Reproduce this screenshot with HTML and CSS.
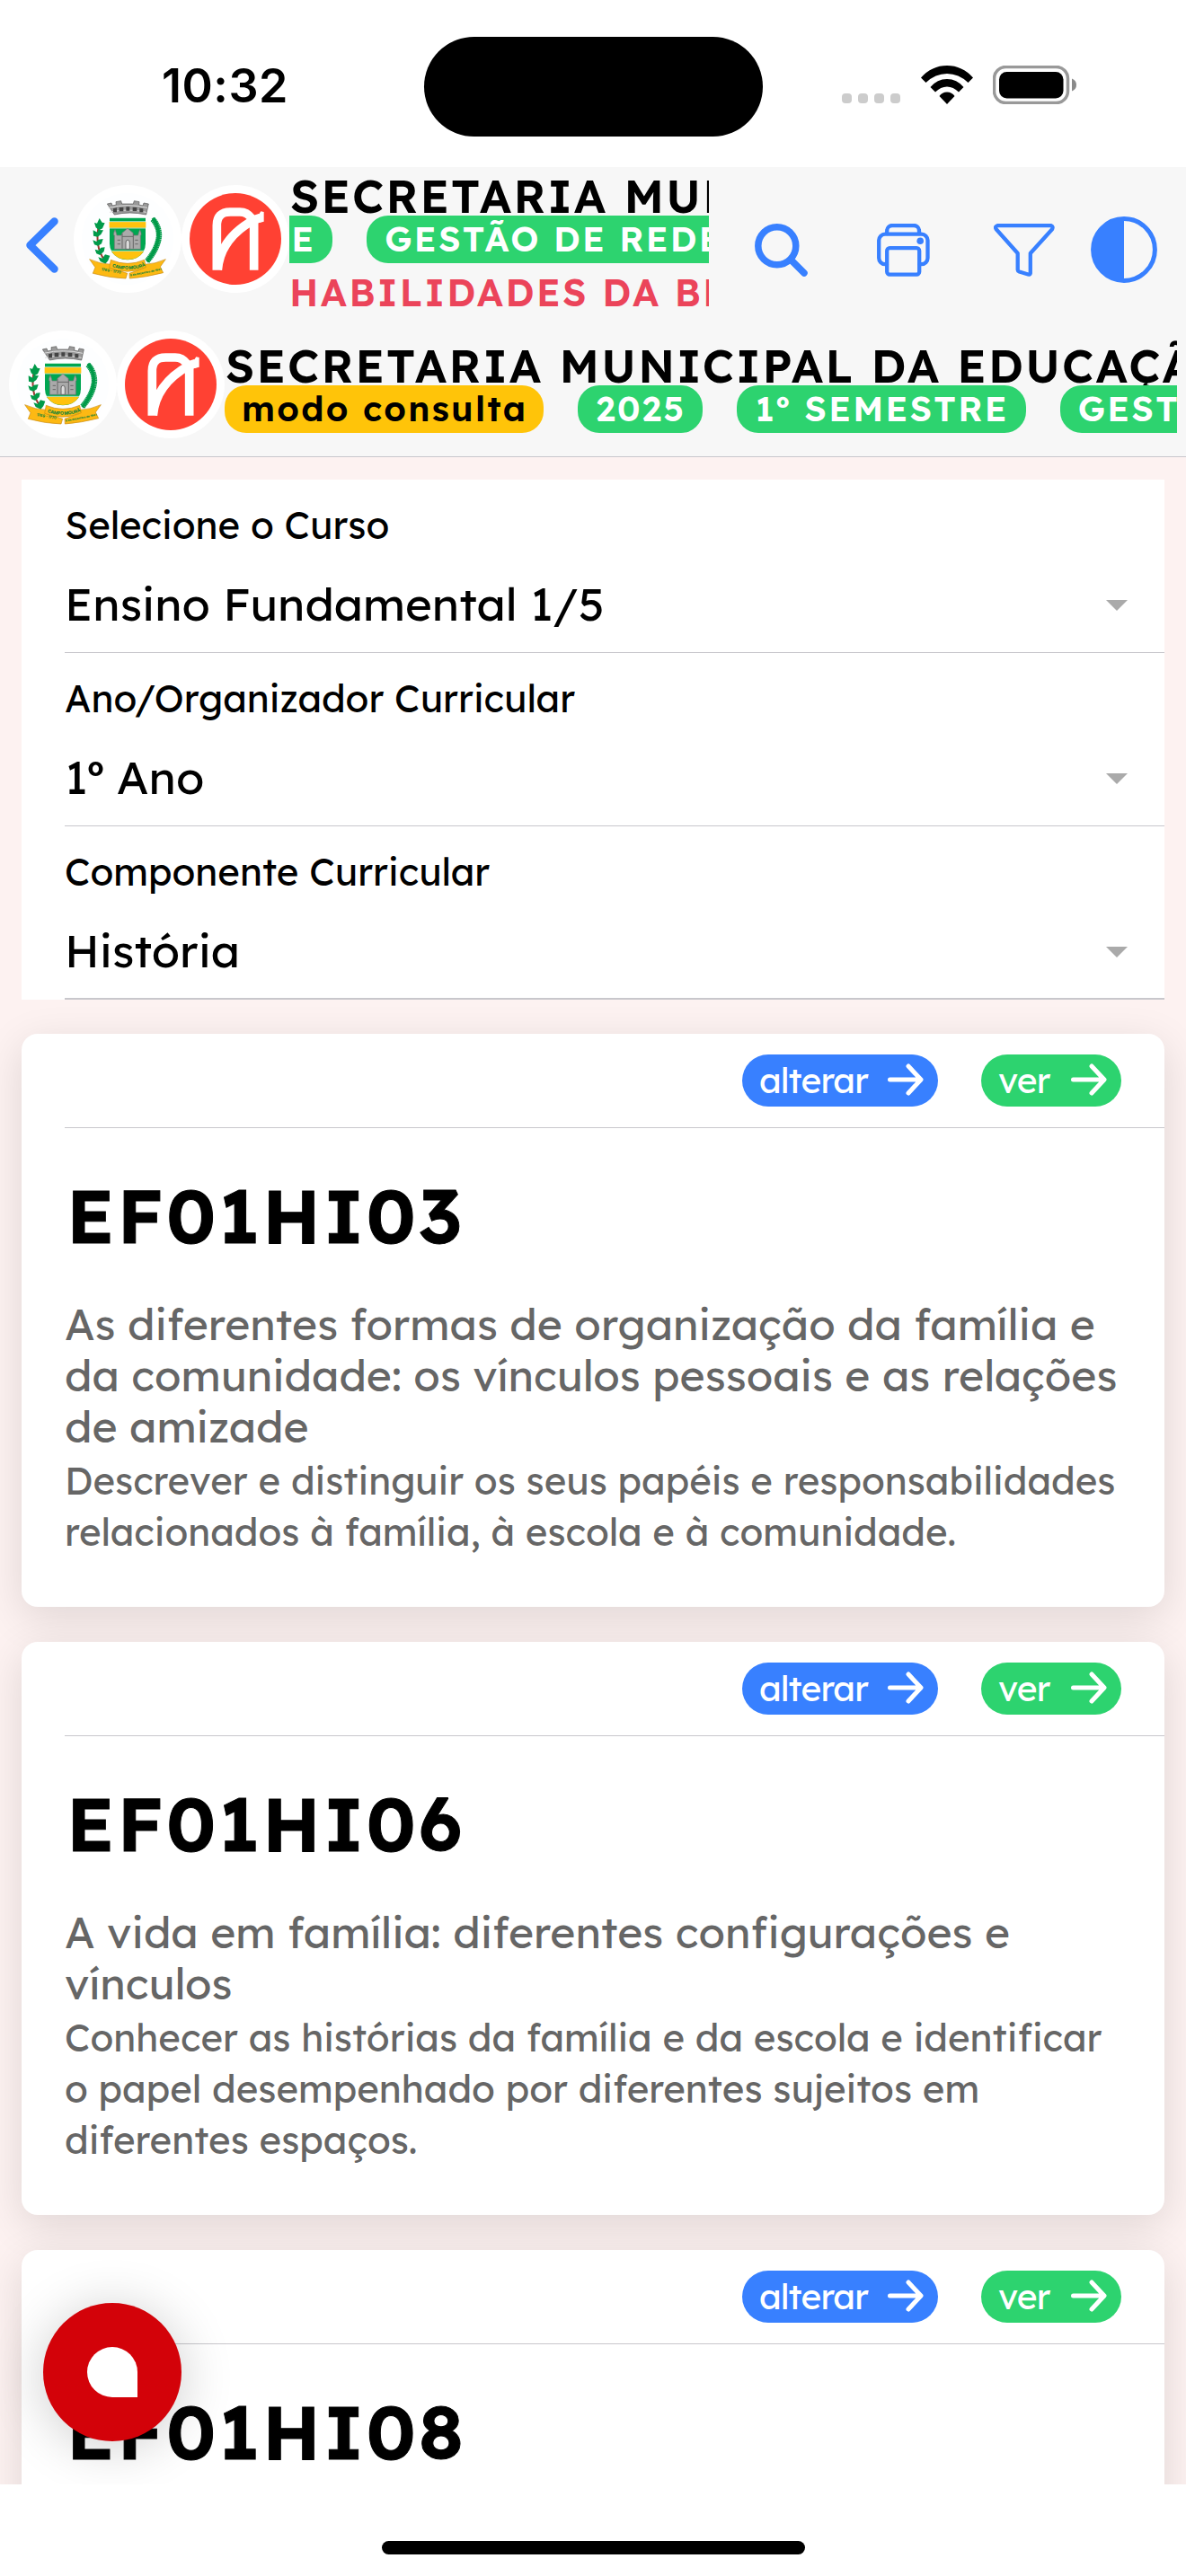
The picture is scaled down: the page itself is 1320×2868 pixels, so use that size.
FILE: index.html
```
<!DOCTYPE html>
<html lang="pt-BR">
<head>
    <meta charset="UTF-8">
    <meta name="viewport" content="width=device-width, initial-scale=1.0">
    <title>Habilidades da BNCC</title>
    <link rel="stylesheet" href="styles.css">
</head>
<body>

<!-- Logos reutilizados nas duas linhas do cabeçalho -->
<svg class="defs" aria-hidden="true">
    <symbol id="brasao" viewBox="6 6 360 360">
        <circle cx="186" cy="186" r="180" fill="#fff"/>
        <circle cx="186" cy="186" r="153" fill="#fdfeff"/>
        <!-- coroa -->
        <path d="M118 69l14-3 3 9 13-3-1-10 17-3 3 10h38l3-10 17 3-1 10 13 3 3-9 16 3-8 36q-55-12-106 0z" fill="#999" stroke="#555" stroke-width="2"/>
        <path d="M122 82q65-16 130 0M126 97q61-14 122 0" fill="none" stroke="#ddd" stroke-width="3"/>
        <path d="M138 85v12h12v-15zM158 81v13h14V80zM181 79v13h12V79zM203 80v13h14V81zM226 83v14h12V85z" fill="#444"/>
        <!-- escudo -->
        <path d="M124 112H248V202a62 54 0 0 1-124 0z" fill="#fff"/>
        <path d="M126 116H246V202q0 16-8 28-17 25-52 26-35-1-52-26-8-12-8-28z" fill="#00a651"/>
        <path d="M125 129H247v20H125z" fill="#ffc20e"/>
        <path d="M132 227H240q-18 28-54 28-36 0-54-28z" fill="#ffc20e"/>
        <path d="M125 128H247M125 150H247M132 226H240" stroke="#fff" stroke-width="2"/>
        <path d="M142 220v-46h-2v-8l4-11 4 11 2 8h16l2-8 18-15 18 15 2 8h15l2-8 4-11 4 11v8h-2v46z" fill="#aaa" stroke="#777" stroke-width="2"/>
        <path d="M180 220v-22a6 8 0 0 1 13 0v22zM152 190h10M152 203h10M211 190h10M211 203h10M168 178h36M168 168v50M205 168v50" fill="#ddd" stroke="#666" stroke-width="3"/>
        <!-- ramos -->
        <path d="M90 142q-7 28-3 60 4 30 22 55" fill="none" stroke="#9c3a30" stroke-width="6"/>
        <path d="M92 117l9 14 9 2-8 18-11 6-11-9-5-16 9 2zM71 157l14 7 3-8 17 1-8 14-11 8-14-3zM70 190l12 5 7-7 15-2-5 16-12 7-12-4zM77 221l12 3 8-9 13-1-3 14-13 12-12-5zM88 247l14 4 9-13 16 4-6 16-9 11-17-8z" fill="#009a49"/>
        <path d="M270 120q22 26 21 56-4 42-40 84" fill="none" stroke="#009a49" stroke-width="19" stroke-dasharray="5 1"/>
        <path d="M270 116q26 34 17 76-8 36-36 70" fill="none" stroke="#009a49" stroke-width="10"/>
        <!-- faixas -->
        <path d="M59 254q35 16 72 17l2 13 52 17-5 17q-52-1-110-17l8-20z" fill="#fdb913" stroke="#c88a10" stroke-width="2"/>
        <path d="M313 254q-35 16-70 17l-3 13-48 17 1 17q54-4 112-19l-10-20z" fill="#fdb913" stroke="#c88a10" stroke-width="2"/>
        <path d="M130 256q56 24 112 0l5 25q-62 26-122 2z" fill="#fdb913" stroke="#c88a10" stroke-width="2"/>
        <path id="curva-nome" d="M134 279q52 18 106-1" fill="none"/>
        <text class="brasao-nome"><textPath href="#curva-nome">CAMPO MOURÃO</textPath></text>
        <text class="brasao-data" x="98" y="291" transform="rotate(10 98 291)">1769 - 1770</text>
        <text class="brasao-lema" x="195" y="311" transform="rotate(-11 195 311)">9 de dezembro de 1947</text>
    </symbol>
    <symbol id="marca" viewBox="6 6 360 360">
        <circle cx="186" cy="186" r="180" fill="#fff"/>
        <circle cx="186" cy="186" r="153" fill="#ff4133"/>
        <path d="M124 290V141q0-45 45-45h32q24 0 40 22M248 290V122M127 290q8-105 121-168l20-6" fill="none" stroke="#fff" stroke-width="29"/>
        <path d="M245 112q18-3 26-18l10 2v32l-24 6z" fill="#fff"/>
    </symbol>
    <symbol id="seta" viewBox="0 0 40 36">
        <path d="M2.500 18H36M23 3L37 18L23 33" fill="none" stroke="#fff" stroke-width="5" stroke-linecap="round" stroke-linejoin="round"/>
    </symbol>
</svg>

<div class="app">
    <!-- Barra de status -->
    <div class="status-bar">
        <div class="time">10:32</div>
        <div class="island"></div>
        <div class="signal"><i></i><i></i><i></i><i></i></div>
        <svg class="wifi" viewBox="0 0 58 43">
            <path d="M0 13.500Q12 0 29 0Q46 0 58 13.500L52.500 19Q42 9 29 9Q16 9 5.500 19z"/>
            <path d="M10.500 24Q18 15 29 15Q40 15 47.500 24L42 29.500Q36 23.500 29 23.500Q22 23.500 16 29.500z"/>
            <path d="M20.500 34Q23.500 29.500 29 29.500Q34.500 29.500 37.500 34L29 43z"/>
        </svg>
        <svg class="battery" viewBox="0 0 94 43">
            <rect x="1.500" y="1.500" width="82" height="40" rx="13" fill="none" stroke="#999" stroke-width="3.500"/>
            <rect x="7" y="7" width="71.500" height="29.500" rx="8.500"/>
            <path d="M88 14.500q5 2 5 7t-5 7z" fill="#8a8a8a"/>
        </svg>
    </div>

    <!-- Cabeçalho -->
    <header class="header">
        <div class="toolbar">
            <svg class="back" viewBox="0 0 36 62">
                <path d="M31.500 4.500L4.500 31L31.500 57.500" fill="none" stroke="#3880ff" stroke-width="8.500" stroke-linecap="round" stroke-linejoin="round"/>
            </svg>
            <svg class="logo"><use href="#brasao"/></svg>
            <svg class="logo"><use href="#marca"/></svg>
            <div class="heading">
                <h1>SECRETARIA MUNICIPAL DA EDUCAÇÃO</h1>
                <div class="badges scrolled">
                    <span class="badge">1º SEMESTRE</span>
                    <span class="badge">GESTÃO DE REDE</span>
                </div>
                <h2>HABILIDADES DA BNCC</h2>
            </div>
            <div class="actions">
                <svg class="icon-search" viewBox="0 0 59 59">
                    <circle cx="24.800" cy="24.800" r="21"/>
                    <path d="M40 40L55 55"/>
                </svg>
                <svg class="icon-print" viewBox="0 0 59 59">
                    <path d="M11.200 11V8a6 6 0 0 1 6-6H41a6 6 0 0 1 6 6v3"/>
                    <path d="M11 45.200H9.200a7 7 0 0 1-7-7V18.600a7 7 0 0 1 7-7H49.500a7 7 0 0 1 7 7V38.200a7 7 0 0 1-7 7H47.500"/>
                    <rect x="11.200" y="27.200" width="36" height="29.400" rx="3"/>
                    <circle class="dot" cx="48.200" cy="19.300" r="3.800"/>
                </svg>
                <svg class="icon-filter" viewBox="0 0 68 59">
                    <path d="M4 2.200H64q2.500 1 1 4L40.800 33V55q-.4 2-2.500 1.500L28.500 53.500q-1.800-.8-1.800-2V33L2.800 6.200q-2-3 1.200-4z"/>
                </svg>
                <svg class="icon-contrast" viewBox="0 0 74 74">
                    <circle cx="37" cy="37" r="34.400"/>
                    <path d="M37 2.500a34.500 34.500 0 0 0 0 69z"/>
                </svg>
            </div>
        </div>

        <div class="subbar">
            <svg class="logo"><use href="#brasao"/></svg>
            <svg class="logo"><use href="#marca"/></svg>
            <div class="heading">
                <h1>SECRETARIA MUNICIPAL DA EDUCAÇÃO</h1>
                <div class="badges">
                    <span class="badge warning">modo consulta</span>
                    <span class="badge">2025</span>
                    <span class="badge">1º SEMESTRE</span>
                    <span class="badge">GESTÃO DE REDE</span>
                </div>
            </div>
        </div>
    </header>

    <main class="content">
        <!-- Filtros -->
        <div class="filters">
            <div class="field">
                <label>Selecione o Curso</label>
                <div class="select">Ensino Fundamental 1/5</div>
            </div>
            <div class="field">
                <label>Ano/Organizador Curricular</label>
                <div class="select">1º Ano</div>
            </div>
            <div class="field">
                <label>Componente Curricular</label>
                <div class="select">História</div>
            </div>
        </div>

        <!-- Lista de habilidades -->
        <article class="card">
            <div class="card-actions">
                <button class="btn edit">alterar <svg><use href="#seta"/></svg></button>
                <button class="btn view">ver <svg><use href="#seta"/></svg></button>
            </div>
            <h3>EF01HI03</h3>
            <p class="subject">As diferentes formas de organização da família e<br>da comunidade: os vínculos pessoais e as relações<br>de amizade</p>
            <p class="description">Descrever e distinguir os seus papéis e responsabilidades<br>relacionados à família, à escola e à comunidade.</p>
        </article>

        <article class="card">
            <div class="card-actions">
                <button class="btn edit">alterar <svg><use href="#seta"/></svg></button>
                <button class="btn view">ver <svg><use href="#seta"/></svg></button>
            </div>
            <h3>EF01HI06</h3>
            <p class="subject">A vida em família: diferentes configurações e<br>vínculos</p>
            <p class="description">Conhecer as histórias da família e da escola e identificar<br>o papel desempenhado por diferentes sujeitos em<br>diferentes espaços.</p>
        </article>

        <article class="card">
            <div class="card-actions">
                <button class="btn edit">alterar <svg><use href="#seta"/></svg></button>
                <button class="btn view">ver <svg><use href="#seta"/></svg></button>
            </div>
            <h3>EF01HI08</h3>
        </article>

        <button class="fab" aria-label="Chat"><span></span></button>
    </main>

    <div class="home-bar"><span></span></div>
</div>

</body>
</html>
```
FILE: styles.css
```
* { box-sizing: border-box; }
body {
    margin: 0;
    font-family: Lexend, Inter, sans-serif;
    color: #000;
    background-color: #fff;
}
h1, h2, h3, p { margin: 0; }
svg { display: block; flex: none; }
.defs { position: absolute; width: 0; height: 0; }
.app { display: flex; flex-direction: column; width: 1320px; height: 2868px; overflow: hidden; }

/* Barra de status */
.status-bar { display: flex; height: 186px; flex: none; align-items: flex-start; }
.time {
    width: 472px;
    padding: 65px 0 0 180px;
    font: 600 52px/62px Inter, sans-serif;
    letter-spacing: 0.01em;
}
.island { width: 377px; height: 111px; margin-top: 41px; border-radius: 56px; background-color: #000; }
.signal { display: flex; gap: 7px; margin: 104px 0 0 88px; }
.signal i { width: 11px; height: 11px; border-radius: 4px; background-color: #ccc; }
.wifi { width: 58px; height: 43px; margin: 73px 0 0 23px; }
.battery { width: 94px; height: 43px; margin: 73px 0 0 22px; }

/* Cabeçalho */
.header {
    height: 323px;
    flex: none;
    background-color: #f7f7f7;
    border-bottom: 1px solid #c8c7cc;
}
.toolbar { display: flex; height: 182px; }
.back { width: 36px; height: 62px; margin: 56px 17px 0 29px; }
.logo { width: 120px; height: 120px; }
.toolbar .logo { margin-top: 20px; }
.brasao-nome { font: 700 15px Inter, sans-serif; fill: #00803c; letter-spacing: -0.5px; }
.brasao-data { font: 700 12px Inter, sans-serif; fill: #00803c; }
.brasao-lema { font: 700 9.5px Inter, sans-serif; fill: #00803c; }

.heading { overflow: hidden; white-space: nowrap; }
.toolbar .heading { width: 467px; flex: none; }
.heading h1 {
    height: 54px;
    overflow: hidden;
    font-size: 51px;
    line-height: 64px;
    font-weight: 600;
    letter-spacing: 2.25px;
    text-indent: 1px;
}
.heading h2 {
    font-size: 42px;
    line-height: 65px;
    font-weight: 600;
    letter-spacing: 2.4px;
    color: #eb445a;
}
.badges { display: flex; gap: 38px; }
.badges.scrolled { margin-left: -273px; }
.badge {
    flex: none;
    height: 53px;
    padding: 0 18px 0 19px;
    border-radius: 24px;
    font-size: 39px;
    line-height: 51px;
    font-weight: 600;
    letter-spacing: 2.25px;
    color: #fff;
    background-color: #2dd36f;
}
.badge:not(.warning) { padding: 0 19px 0 20px; }
.badge.warning { color: #000; background-color: #ffc409; }

.actions { display: flex; align-items: center; height: 74px; margin: 55px 0 0 51px; }
.actions svg { fill: none; stroke: #3880ff; stroke-width: 4.3; stroke-linecap: round; stroke-linejoin: round; }
.actions .icon-search { width: 59px; height: 59px; stroke-width: 7.5; }
.icon-print { width: 59px; height: 59px; margin-left: 77px; }
.actions .icon-print .dot { fill: #3880ff; stroke: none; }
.icon-filter { width: 68px; height: 59px; margin-left: 71px; }
.actions .icon-contrast { width: 74px; height: 74px; margin-left: 40px; stroke-width: 5; }
.actions .icon-contrast path { fill: #3880ff; stroke: none; }

.subbar { display: flex; padding: 0 10px; }
.subbar .heading { flex: 1; padding-top: 7px; }

/* Conteúdo */
.content {
    position: relative;
    flex: 1;
    min-height: 0;
    padding: 25px 24px 0;
    overflow: hidden;
    background-color: #fdf2f1;
}
.filters { background-color: #fff; }
.field { height: 193px; margin-left: 48px; padding-top: 21px; border-bottom: 1px solid #c8c7cc; }
.field:last-child { border-bottom-width: 2px; }
.field label { display: block; font-size: 42px; line-height: 60px; }
.select {
    display: flex;
    align-items: center;
    justify-content: space-between;
    margin-top: 22px;
    padding-right: 41px;
    font-size: 51px;
    line-height: 70px;
}
.select::after {
    content: "";
    margin-top: 4px;
    border-left: 12px solid transparent;
    border-right: 12px solid transparent;
    border-top: 12px solid #aaa;
}

/* Cards */
.card {
    height: 638px;
    margin-top: 39px;
    border-radius: 18px;
    background-color: #fff;
    box-shadow: 0 12px 48px rgba(0, 0, 0, 0.12);
}
.filters + .card { margin-top: 38px; }
.card-actions {
    display: flex;
    justify-content: flex-end;
    gap: 48px;
    height: 105px;
    margin-left: 48px;
    padding: 23px 48px 0 0;
    border-bottom: 1px solid #c8c7cc;
}
.btn {
    display: flex;
    align-items: center;
    justify-content: space-between;
    height: 58px;
    padding: 0 16px 2px 19px;
    border: none;
    border-radius: 29px;
    font: inherit;
    font-size: 39px;
    letter-spacing: -0.9px;
    color: #fff;
}
.btn svg { width: 40px; height: 36px; }
.btn.edit { width: 218px; background-color: #3880ff; }
.btn.view { width: 156px; background-color: #2dd36f; }
.card h3 {
    margin: 48px 0 0 50px;
    font-size: 84px;
    line-height: 98px;
    font-weight: 600;
    letter-spacing: 3.2px;
    -webkit-text-stroke: 1px #000;
}
.subject, .description { margin-left: 48px; line-height: 57px; white-space: nowrap; color: #666; }
.subject { margin-top: 44px; font-size: 48px; }
.description { margin-top: 3px; font-size: 42px; }

/* Botão flutuante do chat */
.fab {
    position: absolute;
    left: 48px;
    bottom: 48px;
    display: flex;
    align-items: center;
    justify-content: center;
    width: 154px;
    height: 154px;
    border: none;
    border-radius: 50%;
    background-color: #d30209;
    box-shadow: 0 6px 60px rgba(0, 0, 0, 0.2);
}
.fab span { width: 56px; height: 56px; border-radius: 50% 50% 0 50%; background-color: #fff; }

.home-bar { display: flex; justify-content: center; height: 102px; flex: none; padding-top: 63px; background-color: #fff; }
.home-bar span { width: 471px; height: 15px; border-radius: 8px; background-color: #000; }
```
